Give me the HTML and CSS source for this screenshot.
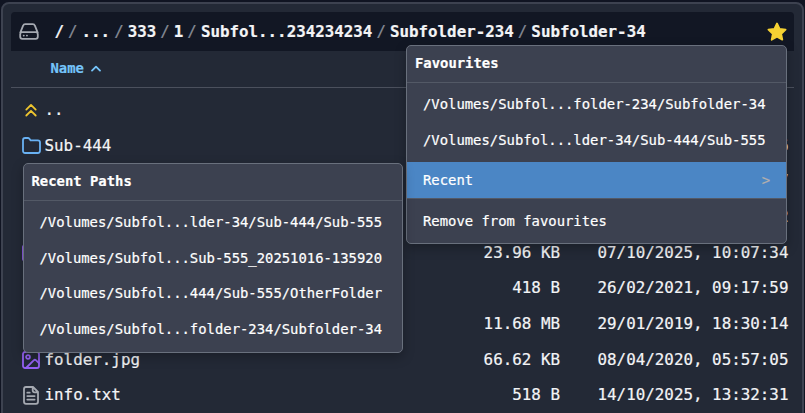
FILE: index.html
```html
<!DOCTYPE html>
<html lang="en">
<head>
<meta charset="utf-8">
<title>Files</title>
<link rel="stylesheet" href="styles.css">
</head>
<body>
<main class="panel">
  <header class="path">
    <svg class="drive" viewBox="0 0 20 18"><path d="M1.2 9.8 4.1 2.7Q4.6 1.2 6.2 1.2h7.6q1.6 0 2.1 1.5l2.9 7.1M3.2 9.2h13.6q2 0 2 2v2.6q0 2-2 2H3.2q-2 0-2-2v-2.6q0-2 2-2z"/><path d="M4.7 12.6h.1M7.9 12.6h.1"/></svg>
    <nav class="crumbs"><b>/</b><i>/</i><b>...</b><i>/</i><b>333</b><i>/</i><b>1</b><i>/</i><b>Subfol...234234234</b><i>/</i><b>Subfolder-234</b><i>/</i><b>Subfolder-34</b></nav>
    <svg class="star" viewBox="0 0 20 19"><path d="m10 1.5 2.6 5.4 6 .8-4.4 4.1 1.1 5.9-5.3-2.9-5.3 2.9 1.1-5.9L1.4 7.7l6-.8z"/></svg>
  </header>
  <div class="columns"><span>Name</span><svg class="caret" viewBox="0 0 10 7"><path d="M1 5.6 5 1.6l4 4"/></svg></div>
  <section class="rows">
    <div class="row"><span class="icon"><svg class="up" viewBox="0 0 12 14"><path d="m1.3 6.6 4.7-4.7 4.7 4.7M1.3 12.5 6 7.8l4.7 4.7"/></svg></span><span class="name">..</span></div>
    <div class="row"><span class="icon"><svg class="folder" viewBox="0 0 19 18"><path d="M1 3.2q0-2.2 2.2-2.2h2.5q1.1 0 1.7.8l1.2 1.6h7.2q2.2 0 2.2 2.2v8.2q0 2.2-2.2 2.2H3.2Q1 16 1 13.8z"/></svg></span><span class="name">Sub-444</span><span class="date edge">6</span></div>
    <div class="row"><span class="date edge">7</span></div>
    <div class="row"><span class="date edge">2</span></div>
    <div class="row"><span class="icon"><svg class="image" viewBox="0 0 18 18"><rect x="1" y="1" width="16" height="16" rx="2"/></svg></span><span class="size">23.96 KB</span><span class="date">07/10/2025, 10:07:34</span></div>
    <div class="row"><span class="size">418 B</span><span class="date">26/02/2021, 09:17:59</span></div>
    <div class="row"><span class="size">11.68 MB</span><span class="date">29/01/2019, 18:30:14</span></div>
    <div class="row"><span class="icon"><svg class="image" viewBox="0 0 18 18"><rect x="1" y="1" width="16" height="16" rx="2"/><circle cx="6" cy="6" r="1.9"/><path d="m4.5 16.5 7.2-7.2q1.2-1.1 2.4 0l2.9 2.9"/></svg></span><span class="name">folder.jpg</span><span class="size">66.62 KB</span><span class="date">08/04/2020, 05:57:05</span></div>
    <div class="row"><span class="icon"><svg class="text" viewBox="0 0 16 19"><path d="M3 1h7l5 5v9.8q0 2-2 2H3q-2 0-2-2V3q0-2 2-2zM9.7 1v3.3q0 2 2 2H15M4.3 6.7h2.4M4.3 10.1h7.3M4.3 13.6h7.3"/></svg></span><span class="name">info.txt</span><span class="size">518 B</span><span class="date">14/10/2025, 13:32:31</span></div>
  </section>
</main>
<aside class="menu favourites">
  <h2>Favourites</h2>
  <div class="group"><div class="item">/Volumes/Subfol...folder-234/Subfolder-34</div><div class="item">/Volumes/Subfol...lder-34/Sub-444/Sub-555</div></div>
  <div class="item active"><span>Recent</span><span class="arrow">&gt;</span></div>
  <div class="group"><div class="item">Remove from favourites</div></div>
</aside>
<aside class="menu recent">
  <h2>Recent Paths</h2>
  <div class="group"><div class="item">/Volumes/Subfol...lder-34/Sub-444/Sub-555</div><div class="item">/Volumes/Subfol...Sub-555_20251016-135920</div><div class="item">/Volumes/Subfol...444/Sub-555/OtherFolder</div><div class="item">/Volumes/Subfol...folder-234/Subfolder-34</div></div>
</aside>
</body>
</html>
```
FILE: styles.css
```css
* { box-sizing: border-box; }
html { height: 100%; overflow: hidden; background: #101422; }
body {
  position: relative;
  height: 413px;
  margin: 0;
  padding: 2px 1px 0;
  overflow: hidden;
  font: 15.86px/1 "DejaVu Sans Mono", monospace;
  color: #f3f4f6;
  -webkit-text-stroke: 0.2px currentColor;
}
svg { display: block; fill: none; stroke: currentColor; stroke-width: 1.8; stroke-linecap: round; stroke-linejoin: round; }

.panel { height: 430px; padding: 8px; border: 2px solid #3d4250; border-radius: 8px; background: #232936; }
.path { display: flex; align-items: center; height: 39px; padding: 0 7px 0 8px; border-radius: 4px 4px 0 0; background: #121724; }
.drive { width: 20px; height: 18px; color: #a5a9b1; }
.crumbs { display: flex; margin-left: 15.5px; font-size: 15.84px; white-space: pre; }
.crumbs i { margin: 0 4px; font-style: normal; color: #858a95; }
.star { width: 20px; height: 19px; margin-left: auto; color: #f6d233; fill: currentColor; }

.columns { display: flex; align-items: center; height: 37px; padding: 0 0 1px 39.5px; border-bottom: 1px solid #4b505d; font-size: 13.9px; font-weight: bold; color: #75c4fa; }
.caret { width: 10px; height: 7px; margin-left: 7px; }

.rows { padding-top: 4px; }
.row { display: flex; align-items: center; height: 35.7px; padding: 0 5.5px 0 10px; }
.icon { display: flex; justify-content: center; width: 20px; margin-right: 3.5px; }
.size { margin-left: auto; }
.date { width: 191px; margin-left: auto; white-space: pre; }
.date.edge { width: auto; }
.size + .date { margin-left: 37.5px; }
.up { width: 12px; height: 14px; color: #eec52f; }
.folder { width: 19px; height: 18px; color: #69b1f3; }
.image { width: 18px; height: 18px; color: #9460f2; }
.text { width: 16px; height: 19px; color: #a5a9b1; }

.menu { position: absolute; border: 1px solid #69707d; border-radius: 5px; background: #3c4150; box-shadow: 0 4px 12px #0004; font-size: 13.88px; color: #fff; }
.favourites { top: 45px; left: 406px; width: 381px; }
.recent { top: 163px; left: 22.5px; width: 380.5px; }
.menu h2 { display: flex; align-items: center; height: 37px; margin: 0; padding: 1px 8px 1px; border-bottom: 1px solid #535966; font-size: inherit; }
.group { padding: 4px 0; }
.item { display: flex; align-items: center; justify-content: space-between; height: 35.7px; padding: 0 16px; white-space: pre; }
.active { height: 37px; padding-top: 1px; border-bottom: 1px solid #535966; background: #4b86c5; }
.active + .group { padding-bottom: 4px; }
.active + .group .item { padding-top: 1px; }
.arrow { color: #b5b0ae; }
```
